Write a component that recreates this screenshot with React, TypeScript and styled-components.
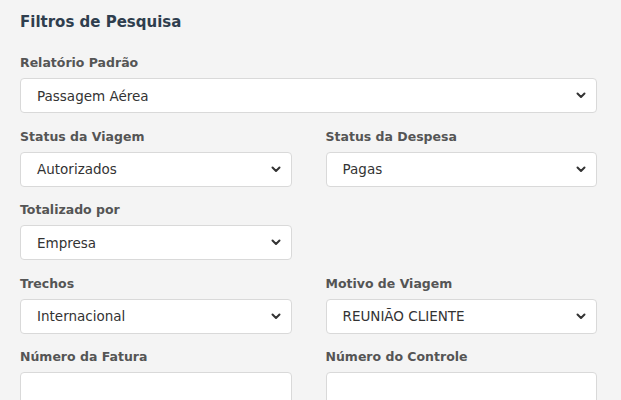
import React from "react";
import styled, { createGlobalStyle } from "styled-components";

const Global = createGlobalStyle`
  html, body { margin: 0; padding: 0; background: #f4f4f4; }
  body { font-family: "DejaVu Sans", Verdana, sans-serif; color: #333; }
`;

const Panel = styled.div`
  padding: 12px 24px 0 20px;
`;

const Title = styled.h3`
  margin: 0 0 23px;
  font-size: 15px;
  font-weight: bold;
  color: #2f3e4e;
  line-height: 20px;
`;

const Grid = styled.div`
  display: grid;
  grid-template-columns: 1fr 1fr;
  column-gap: 34px;
`;

const Group = styled.div<{ $full?: boolean }>`
  display: flex;
  flex-direction: column;
  margin-bottom: 15.5px;
  ${(p) => (p.$full ? "grid-column: 1 / -1;" : "")}
`;

const Label = styled.label`
  font-size: 12.5px;
  font-weight: bold;
  color: #555;
  line-height: 16px;
  margin-bottom: 7px;
`;

const Box = styled.div`
  box-sizing: border-box;
  height: 35px;
  background: #fff;
  border: 1px solid #d9d9d9;
  border-radius: 4px;
  display: flex;
  align-items: center;
  padding: 0 10px 0 16px;
  font-size: 13.5px;
  color: #333;
`;

const Value = styled.span`
  flex: 1;
`;

const Chevron = () => (
  <svg width="10" height="7" viewBox="0 0 10 7">
    <path d="M1.5 1.5 L5 5 L8.5 1.5" fill="none" stroke="#333" strokeWidth="2" strokeLinecap="round" strokeLinejoin="round" />
  </svg>
);

const Select = ({ value }: { value: string }) => (
  <Box>
    <Value>{value}</Value>
    <Chevron />
  </Box>
);

export default function App() {
  return (
    <>
      <Global />
      <Panel>
        <Title>Filtros de Pesquisa</Title>
        <Grid>
          <Group $full>
            <Label>Relatório Padrão</Label>
            <Select value="Passagem Aérea" />
          </Group>
          <Group>
            <Label>Status da Viagem</Label>
            <Select value="Autorizados" />
          </Group>
          <Group>
            <Label>Status da Despesa</Label>
            <Select value="Pagas" />
          </Group>
          <Group>
            <Label>Totalizado por</Label>
            <Select value="Empresa" />
          </Group>
          <div />
          <Group>
            <Label>Trechos</Label>
            <Select value="Internacional" />
          </Group>
          <Group>
            <Label>Motivo de Viagem</Label>
            <Select value="REUNIÃO CLIENTE" />
          </Group>
          <Group>
            <Label>Número da Fatura</Label>
            <Box />
          </Group>
          <Group>
            <Label>Número do Controle</Label>
            <Box />
          </Group>
        </Grid>
      </Panel>
    </>
  );
}
